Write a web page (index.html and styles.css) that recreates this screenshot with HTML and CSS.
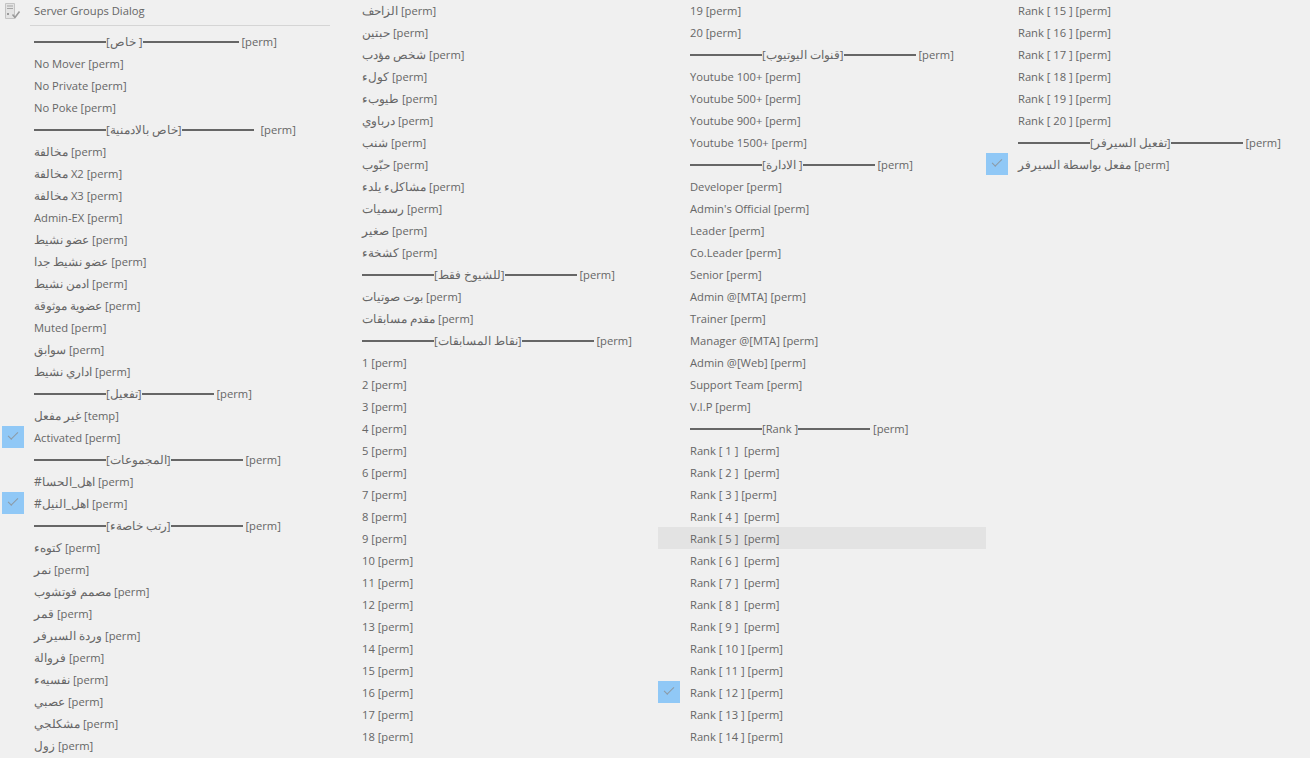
FILE: index.html
```html
<!DOCTYPE html>
<html lang="en">
<head>
<meta charset="utf-8">
<title>Server Groups Dialog</title>
<link rel="stylesheet" href="styles.css">
</head>
<body>
<div class="menu">
  <ul class="col col-first">
    <li class="title"><svg class="ticon" width="18" height="18" viewBox="0 0 18 18"><path d="M2.5 1.5h9v15h-9z" fill="#e4e4e4" stroke="#c4c4c4"/><path d="M4 4h6M4 6.500h6" stroke="#a5a5a5"/><rect x="4" y="11" width="2" height="2" fill="#9c9c9c"/><path d="M9.500 12.500l2.500 3 4.500-6" fill="none" stroke="#9a9a9a" stroke-width="1.600"/></svg><span>Server Groups Dialog</span></li>
    <li class="rule"></li>
    <li class="item"><span class="bar"></span><bdi dir="ltr">[خاص ]</bdi><span class="bar bar-long"></span> [perm]</li>
    <li class="item">No Mover [perm]</li>
    <li class="item">No Private [perm]</li>
    <li class="item">No Poke [perm]</li>
    <li class="item"><span class="bar"></span><bdi dir="ltr">[خاص بالادمنية]</bdi><span class="bar"></span> <span class="gap"></span>[perm]</li>
    <li class="item"><bdi>مخالفة</bdi> [perm]</li>
    <li class="item"><bdi>مخالفة</bdi> X2 [perm]</li>
    <li class="item"><bdi>مخالفة</bdi> X3 [perm]</li>
    <li class="item">Admin-EX [perm]</li>
    <li class="item"><bdi>عضو نشيط</bdi> [perm]</li>
    <li class="item"><bdi>عضو نشيط جدا</bdi> [perm]</li>
    <li class="item"><bdi>ادمن نشيط</bdi> [perm]</li>
    <li class="item"><bdi>عضوية موثوقة</bdi> [perm]</li>
    <li class="item">Muted [perm]</li>
    <li class="item"><bdi>سوابق</bdi> [perm]</li>
    <li class="item"><bdi>اداري نشيط</bdi> [perm]</li>
    <li class="item"><span class="bar"></span><bdi dir="ltr">[تفعيل]</bdi><span class="bar"></span> [perm]</li>
    <li class="item"><bdi>غير مفعل</bdi> [temp]</li>
    <li class="item on">Activated [perm]</li>
    <li class="item"><span class="bar"></span><bdi dir="ltr">[المجموعات]</bdi><span class="bar"></span> [perm]</li>
    <li class="item"><bdi dir="ltr">#اهل_الحسا</bdi> [perm]</li>
    <li class="item on"><bdi dir="ltr">#اهل_النيل</bdi> [perm]</li>
    <li class="item"><span class="bar"></span><bdi dir="ltr">[رتب خاصةء]</bdi><span class="bar"></span> [perm]</li>
    <li class="item"><bdi>كتوهء</bdi> [perm]</li>
    <li class="item"><bdi>نمر</bdi> [perm]</li>
    <li class="item"><bdi>مصمم فوتشوب</bdi> [perm]</li>
    <li class="item"><bdi>قمر</bdi> [perm]</li>
    <li class="item"><bdi>وردة السيرفر</bdi> [perm]</li>
    <li class="item"><bdi>فروالة</bdi> [perm]</li>
    <li class="item"><bdi>نفسيهء</bdi> [perm]</li>
    <li class="item"><bdi>عصبي</bdi> [perm]</li>
    <li class="item"><bdi>مشكلجي</bdi> [perm]</li>
    <li class="item"><bdi>زول</bdi> [perm]</li>
  </ul>
  <ul class="col">
    <li class="item"><bdi>الزاحف</bdi> [perm]</li>
    <li class="item"><bdi>حبتين</bdi> [perm]</li>
    <li class="item"><bdi>شخص مؤدب</bdi> [perm]</li>
    <li class="item"><bdi>كولء</bdi> [perm]</li>
    <li class="item"><bdi>طيوبء</bdi> [perm]</li>
    <li class="item"><bdi>درباوي</bdi> [perm]</li>
    <li class="item"><bdi>شنب</bdi> [perm]</li>
    <li class="item"><bdi>حبّوب</bdi> [perm]</li>
    <li class="item"><bdi>مشاكلء يلدء</bdi> [perm]</li>
    <li class="item"><bdi>رسميات</bdi> [perm]</li>
    <li class="item"><bdi>صغير</bdi> [perm]</li>
    <li class="item"><bdi>كشخةء</bdi> [perm]</li>
    <li class="item"><span class="bar"></span><bdi dir="ltr">[للشيوخ فقط]</bdi><span class="bar"></span> [perm]</li>
    <li class="item"><bdi>بوت صوتيات</bdi> [perm]</li>
    <li class="item"><bdi>مقدم مسابقات</bdi> [perm]</li>
    <li class="item"><span class="bar"></span><bdi dir="ltr">[نقاط المسابقات]</bdi><span class="bar"></span> [perm]</li>
    <li class="item">1 [perm]</li>
    <li class="item">2 [perm]</li>
    <li class="item">3 [perm]</li>
    <li class="item">4 [perm]</li>
    <li class="item">5 [perm]</li>
    <li class="item">6 [perm]</li>
    <li class="item">7 [perm]</li>
    <li class="item">8 [perm]</li>
    <li class="item">9 [perm]</li>
    <li class="item">10 [perm]</li>
    <li class="item">11 [perm]</li>
    <li class="item">12 [perm]</li>
    <li class="item">13 [perm]</li>
    <li class="item">14 [perm]</li>
    <li class="item">15 [perm]</li>
    <li class="item">16 [perm]</li>
    <li class="item">17 [perm]</li>
    <li class="item">18 [perm]</li>
  </ul>
  <ul class="col">
    <li class="item">19 [perm]</li>
    <li class="item">20 [perm]</li>
    <li class="item"><span class="bar"></span><bdi dir="ltr">[قنوات اليوتيوب]</bdi><span class="bar"></span> [perm]</li>
    <li class="item">Youtube 100+ [perm]</li>
    <li class="item">Youtube 500+ [perm]</li>
    <li class="item">Youtube 900+ [perm]</li>
    <li class="item">Youtube 1500+ [perm]</li>
    <li class="item"><span class="bar"></span><bdi dir="ltr">[الادارة ]</bdi><span class="bar"></span> [perm]</li>
    <li class="item">Developer [perm]</li>
    <li class="item">Admin's Official [perm]</li>
    <li class="item">Leader [perm]</li>
    <li class="item">Co.Leader [perm]</li>
    <li class="item">Senior [perm]</li>
    <li class="item">Admin @[MTA] [perm]</li>
    <li class="item">Trainer [perm]</li>
    <li class="item">Manager @[MTA] [perm]</li>
    <li class="item">Admin @[Web] [perm]</li>
    <li class="item">Support Team [perm]</li>
    <li class="item">V.I.P [perm]</li>
    <li class="item"><span class="bar"></span>[Rank ]<span class="bar"></span> [perm]</li>
    <li class="item">Rank [ 1 ]&nbsp; [perm]</li>
    <li class="item">Rank [ 2 ]&nbsp; [perm]</li>
    <li class="item">Rank [ 3 ] [perm]</li>
    <li class="item">Rank [ 4 ]&nbsp; [perm]</li>
    <li class="item hover">Rank [ 5 ]&nbsp; [perm]</li>
    <li class="item">Rank [ 6 ]&nbsp; [perm]</li>
    <li class="item">Rank [ 7 ]&nbsp; [perm]</li>
    <li class="item">Rank [ 8 ]&nbsp; [perm]</li>
    <li class="item">Rank [ 9 ]&nbsp; [perm]</li>
    <li class="item">Rank [ 10 ] [perm]</li>
    <li class="item">Rank [ 11 ] [perm]</li>
    <li class="item on">Rank [ 12 ] [perm]</li>
    <li class="item">Rank [ 13 ] [perm]</li>
    <li class="item">Rank [ 14 ] [perm]</li>
  </ul>
  <ul class="col">
    <li class="item">Rank [ 15 ] [perm]</li>
    <li class="item">Rank [ 16 ] [perm]</li>
    <li class="item">Rank [ 17 ] [perm]</li>
    <li class="item">Rank [ 18 ] [perm]</li>
    <li class="item">Rank [ 19 ] [perm]</li>
    <li class="item">Rank [ 20 ] [perm]</li>
    <li class="item"><span class="bar"></span><bdi dir="ltr">[تفعيل السيرفر]</bdi><span class="bar"></span> [perm]</li>
    <li class="item on"><bdi>مفعل بواسطة السيرفر</bdi> [perm]</li>
  </ul>
</div>
</body>
</html>
```
FILE: styles.css
```css
html, body {
  margin: 0;
  height: 100%;
  background: #f0f0f0;
  overflow: hidden;
}
body {
  font-family: "Open Sans", "Noto Sans", "Liberation Sans", sans-serif;
  font-size: 11.2px;
  color: #666;
}
bdi {
  font-size: 12px;
  line-height: 0;
}
.bar + bdi {
  font-size: 11.5px;
}
.menu {
  display: flex;
  padding-left: 2px;
  height: 758px;
  overflow: hidden;
}
.col {
  list-style: none;
  margin: -1px 0 0;
  padding: 0;
  width: 328px;
  flex: none;
}
.col-first {
  margin-top: 0;
}
.title {
  display: flex;
  align-items: center;
  box-sizing: border-box;
  height: 22px;
  padding-bottom: 1px;
}
.ticon {
  margin-left: 1px;
  margin-right: 13px;
  margin-top: 1px;
  flex: none;
}
.rule {
  height: 1px;
  margin: 3px 0 4px 28px;
  background: #d5d5d5;
}
.item {
  position: relative;
  height: 22px;
  line-height: 24px;
  padding-left: 32px;
  white-space: nowrap;
}
.bar {
  display: inline-block;
  width: 72px;
  height: 2px;
  background: #666;
  vertical-align: 3px;
}
.bar-long {
  width: 96px;
}
.gap {
  display: inline-block;
  width: 4px;
}
.hover {
  background: #e3e3e3;
}
.on::before {
  content: "";
  position: absolute;
  left: 0;
  top: 0;
  width: 22px;
  height: 22px;
  background: #90c8f6;
}
.on::after {
  content: "";
  position: absolute;
  left: 6px;
  top: 6px;
  width: 9px;
  height: 4px;
  border-left: 1.5px solid #8c9aa6;
  border-bottom: 1.5px solid #8c9aa6;
  transform: rotate(-45deg);
}
```
